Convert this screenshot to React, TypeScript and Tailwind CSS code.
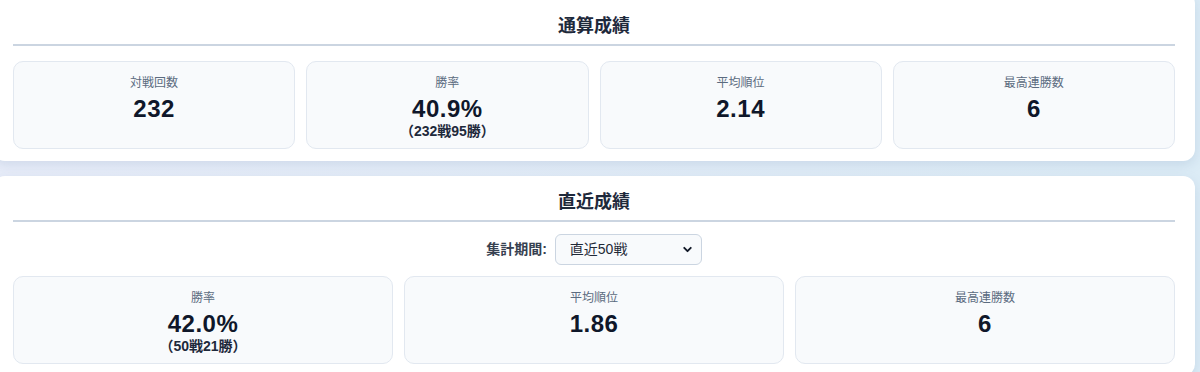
import { ChevronDown } from 'lucide-react';

type Stat = { label: string; value: string; sub?: string };

const totalStats: Stat[] = [
  { label: '対戦回数', value: '232' },
  { label: '勝率', value: '40.9%', sub: '（232戦95勝）' },
  { label: '平均順位', value: '2.14' },
  { label: '最高連勝数', value: '6' },
];

const recentStats: Stat[] = [
  { label: '勝率', value: '42.0%', sub: '（50戦21勝）' },
  { label: '平均順位', value: '1.86' },
  { label: '最高連勝数', value: '6' },
];

function StatBox({ stat }: { stat: Stat }) {
  return (
    <div className="flex flex-col items-center rounded-[10px] border border-[#e2e8f0] bg-[#f8fafc] pt-[12px] pb-[9px]">
      <div className="mb-[3px] text-[12px] leading-[18px] text-[#5b6b80]">{stat.label}</div>
      <div className="text-[24px] font-bold leading-[28px] tracking-[0.5px] text-[#0f172a]">{stat.value}</div>
      {stat.sub && (
        <div className="text-[14px] font-bold leading-[16px] text-[#1e293b]">{stat.sub}</div>
      )}
    </div>
  );
}

function SectionTitle({ children }: { children: string }) {
  return (
    <h2 className="border-b-2 border-[#cbd5e1] pb-[4px] text-center text-[18px] font-bold leading-[28px] text-[#1e293b]">
      {children}
    </h2>
  );
}

export default function App() {
  return (
    <main
      className="h-[372px] w-full overflow-hidden bg-gradient-to-r from-[#e8edf9] to-[#dcecf6]"
      style={{ fontFamily: '"Liberation Sans", "Noto Sans CJK JP", sans-serif' }}
    >
      <div className="ml-[-7px] mr-[5px] mt-[-8px] flex flex-col">
        <section className="rounded-xl bg-white px-5 pt-[20px] pb-[12px] shadow-[0_4px_12px_rgba(100,130,170,0.18)]">
          <SectionTitle>通算成績</SectionTitle>
          <div className="mt-[15px] grid grid-cols-4 gap-[11px]">
            {totalStats.map((s) => (
              <StatBox key={s.label} stat={s} />
            ))}
          </div>
        </section>

        <section className="mt-[15px] rounded-xl bg-white px-5 pt-[12px] pb-[12px] shadow-[0_4px_12px_rgba(100,130,170,0.18)]">
          <SectionTitle>直近成績</SectionTitle>
          <div className="mt-[12px] flex items-center justify-center gap-[8px]">
            <span className="text-[14px] font-bold text-[#374151]">集計期間:</span>
            <div className="relative">
              <select
                defaultValue="50"
                className="h-[31px] w-[147px] appearance-none rounded-md border border-[#cbd5e1] bg-[#f8fafc] pl-[14px] text-[14px] text-[#1f2937]"
              >
                <option value="50">直近50戦</option>
                <option value="100">直近100戦</option>
              </select>
              <ChevronDown
                className="pointer-events-none absolute right-[8px] top-[9px] h-[13px] w-[13px] text-[#111827]"
                strokeWidth={3.5}
              />
            </div>
          </div>
          <div className="mt-[11px] grid grid-cols-3 gap-[11px]">
            {recentStats.map((s) => (
              <StatBox key={s.label} stat={s} />
            ))}
          </div>
        </section>
      </div>
    </main>
  );
}
